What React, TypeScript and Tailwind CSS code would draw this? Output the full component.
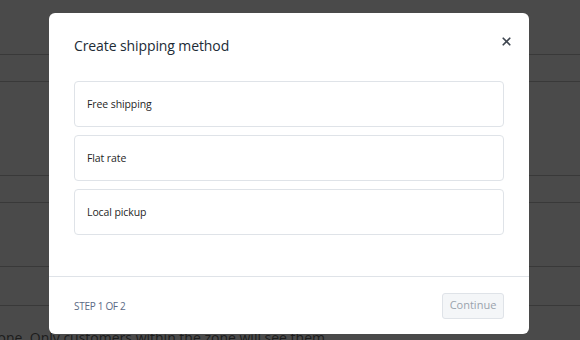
import { X } from 'lucide-react'

const METHODS = ['Free shipping', 'Flat rate', 'Local pickup']

export default function App() {
  return (
    <div className="relative h-[340px] w-[580px] overflow-hidden bg-[#4a4a4a] font-['Open_Sans',sans-serif]">
      {/* page behind the dialog */}
      <div className="flex flex-col">
        <div className="h-[55px] border-b border-[#393939]" />
        <div className="h-[27px] border-b border-[#393939]" />
        <div className="h-[94px] border-b border-[#393939]" />
        <div className="h-[27px] border-b border-[#393939]" />
        <div className="h-[64px] border-b border-[#393939]" />
        <div className="h-[39px] border-b border-[#393939]" />
        <p className="ml-[-9px] mt-[22px] whitespace-nowrap text-[14px] leading-[20px] text-[#1c1c1c]">
          zone. Only customers within the zone will see them.
        </p>
      </div>

      <div className="absolute left-[49px] top-[13px] flex h-[321px] w-[480px] flex-col rounded-[6px] bg-white">
        <div className="flex items-start justify-between px-[25px] pt-[23px]">
          <h2 className="text-[14px] leading-[20px] tracking-[-0.1px] text-[#212b36]">Create shipping method</h2>
          <button className="mr-[-9px] mt-[-1px] text-[#3f4650]">
            <X size={13} strokeWidth={3.2} />
          </button>
        </div>

        <div className="flex flex-1 flex-col gap-[8px] px-[25px] pt-[25px]">
          {METHODS.map((m) => (
            <div
              key={m}
              className="flex h-[46px] items-center rounded-[4px] border border-[#dfe3e8] pl-[12px] pt-[2px] text-[10.5px] tracking-[-0.1px] text-[#1f1f1f]"
            >
              {m}
            </div>
          ))}
        </div>

        <div className="flex h-[58px] items-center justify-between border-t border-[#dfe3e8] px-[25px]">
          <span className="pt-[1px] text-[10px] uppercase tracking-[-0.3px] text-[#5c6a85]">Step 1 of 2</span>
          <button className="h-[26px] w-[62px] rounded-[3px] border border-[#dfe3e8] bg-[#f4f6f8] text-[11px] text-[#9aa3ad]">
            Continue
          </button>
        </div>
      </div>
    </div>
  )
}
